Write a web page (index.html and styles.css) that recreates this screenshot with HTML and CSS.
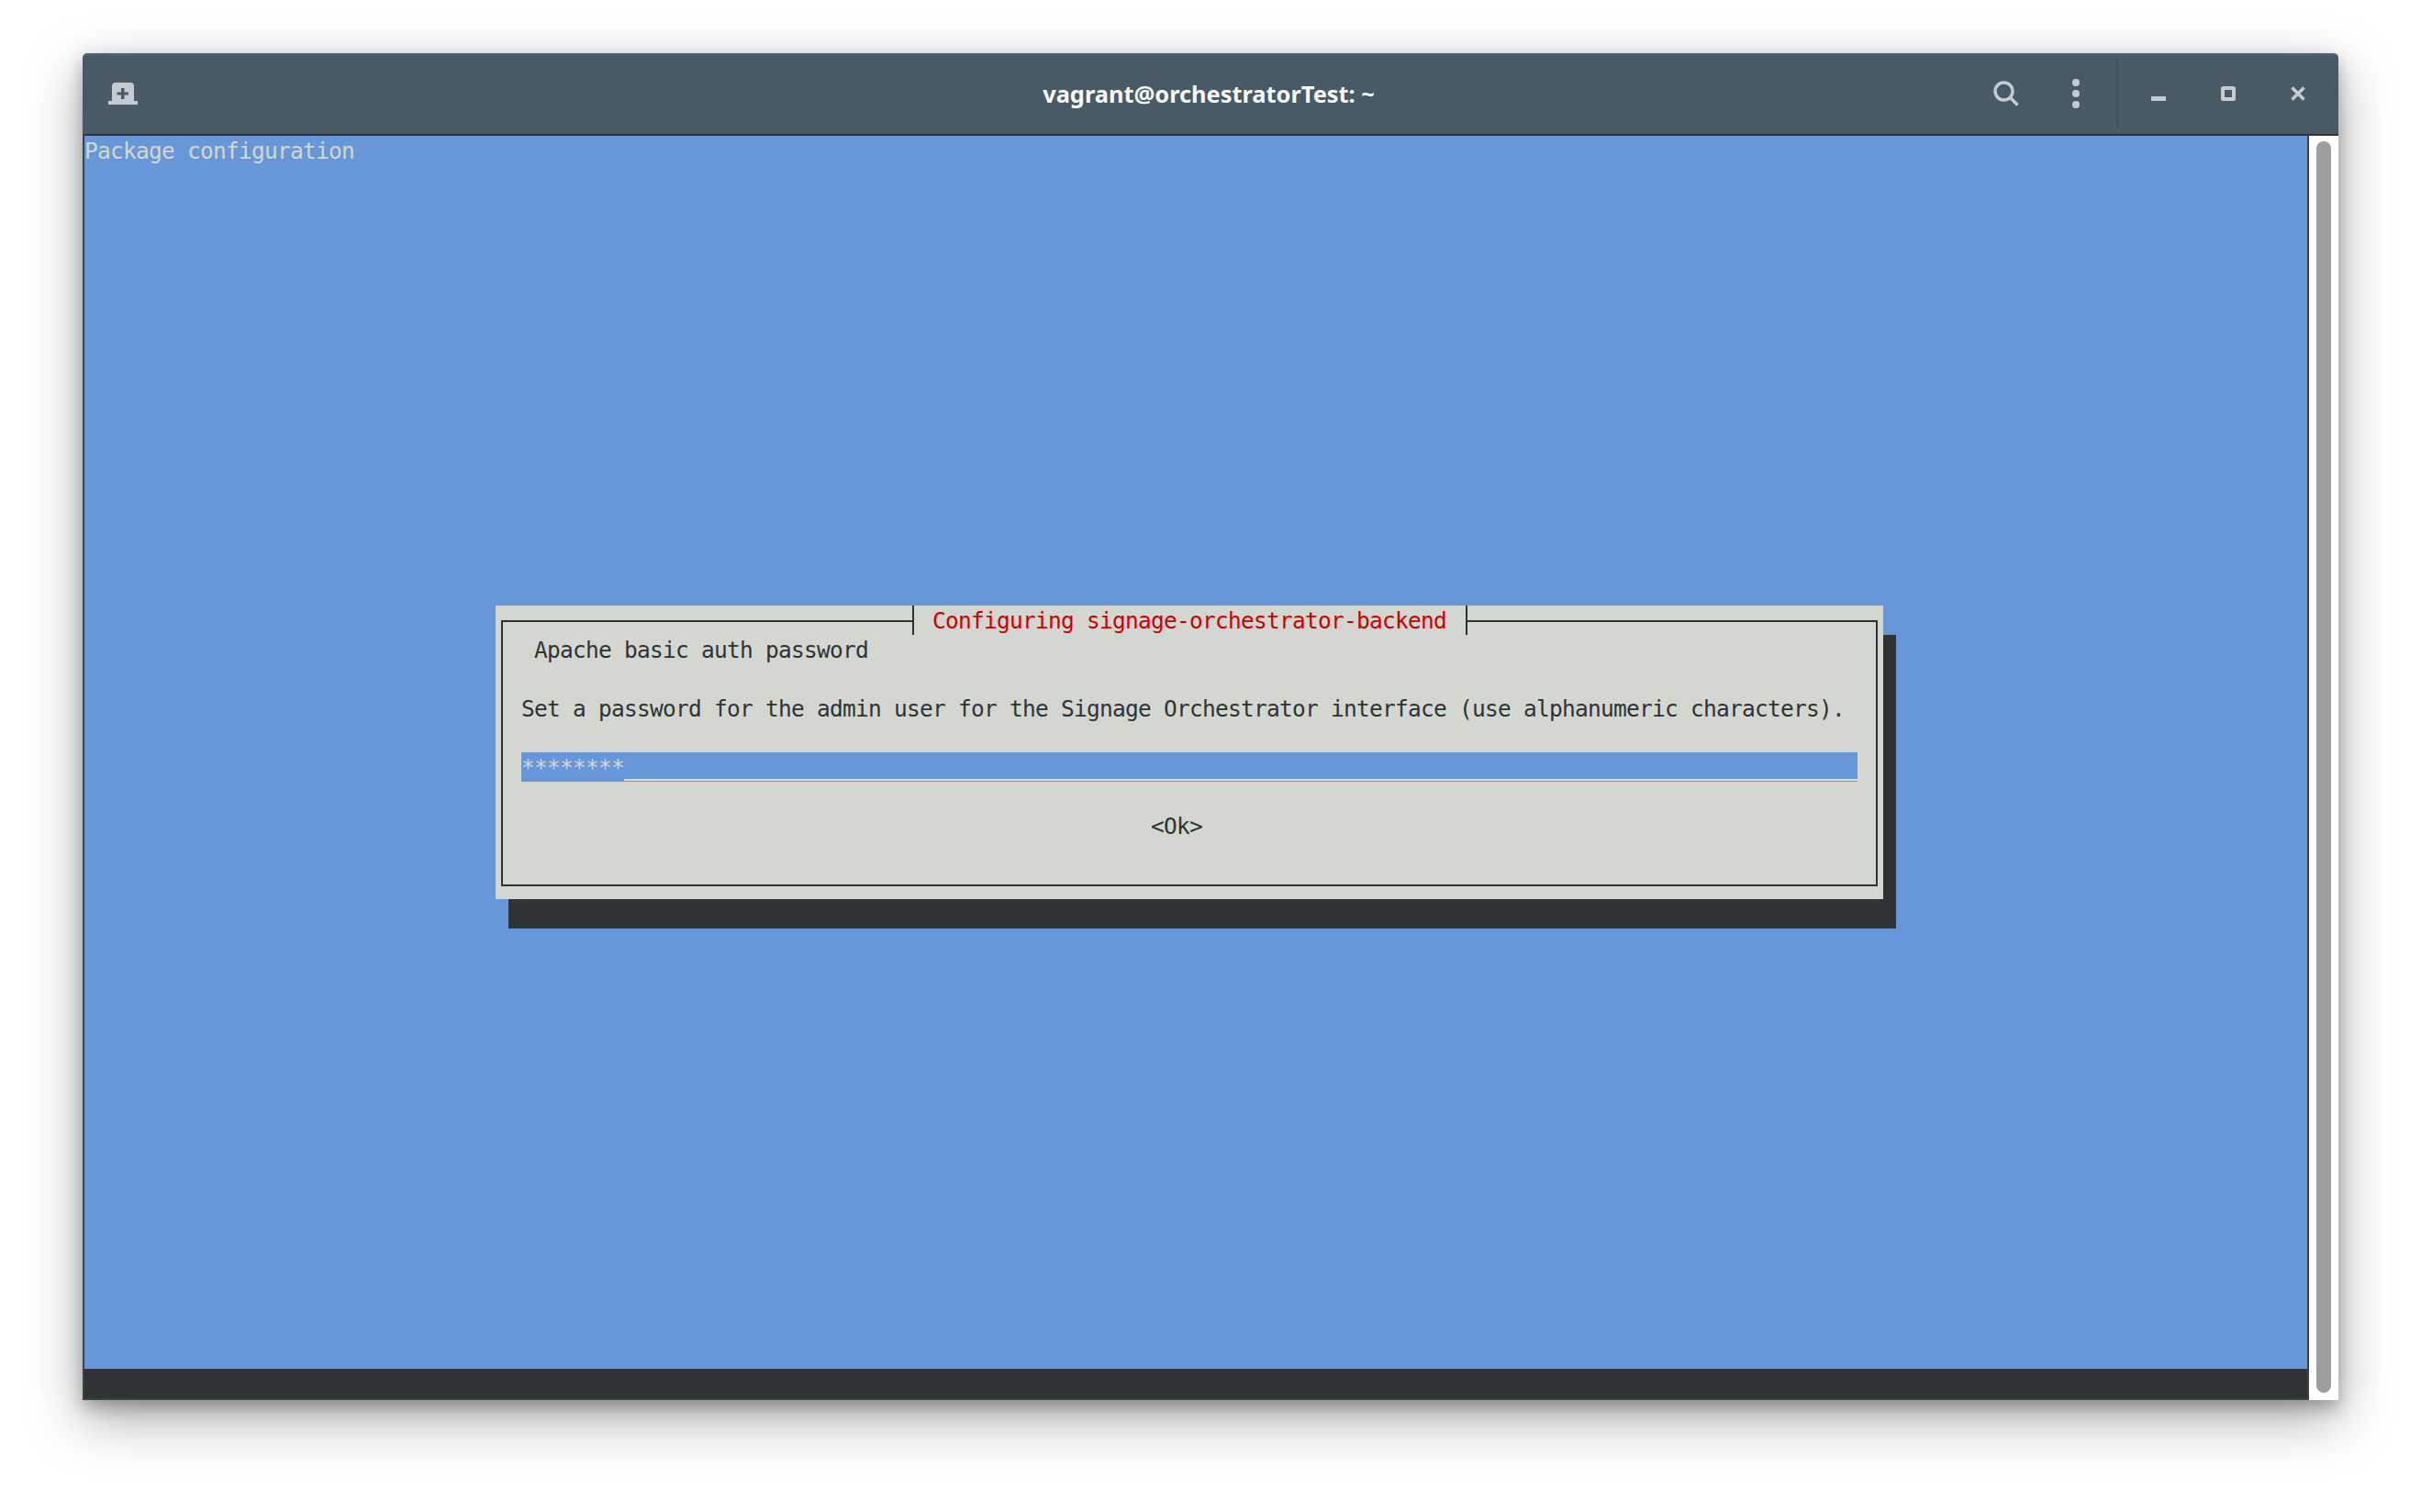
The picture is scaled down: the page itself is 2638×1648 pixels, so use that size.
FILE: index.html
```html
<!DOCTYPE html>
<html lang="en">
<head>
<meta charset="utf-8">
<title>vagrant@orchestratorTest: ~</title>
<link rel="stylesheet" href="styles.css">
</head>
<body>
<main class="window">
  <header class="titlebar">
    <div class="tb-left">
      <svg class="icon-newtab" width="32" height="24" viewBox="0 0 32 24">
        <path fill="#c5cbd0" fill-rule="evenodd" d="M8 0h16a4 4 0 0 1 4 4v16h4v4H0v-4h4V4a4 4 0 0 1 4-4zM14 6v4.500h-4.500v3H14V18h3.500v-4.500H22v-3h-4.500V6z"/>
      </svg>
    </div>
    <h1 class="title">vagrant@orchestratorTest: ~</h1>
    <div class="tb-right">
      <div class="tb-tools">
        <svg class="icon-search" width="28" height="28" viewBox="0 0 28 28">
          <circle cx="11.500" cy="11.500" r="9.500" fill="none" stroke="#c5cbd0" stroke-width="3.400"/>
          <path d="M18.500 18.500L26.500 26.500" fill="none" stroke="#c5cbd0" stroke-width="3.400"/>
        </svg>
        <svg class="icon-menu" width="8" height="32" viewBox="0 0 8 32">
          <circle cx="4" cy="4" r="4" fill="#c5cbd0"/>
          <circle cx="4" cy="16" r="4" fill="#c5cbd0"/>
          <circle cx="4" cy="28" r="4" fill="#c5cbd0"/>
        </svg>
      </div>
      <div class="tb-controls">
        <svg width="16" height="16" viewBox="0 0 16 16"><rect x="0" y="11" width="16" height="5" fill="#c5cbd0"/></svg>
        <svg width="16" height="16" viewBox="0 0 16 16"><rect x="2" y="2" width="12" height="12" rx="0.500" fill="none" stroke="#c5cbd0" stroke-width="4"/></svg>
        <svg width="16" height="16" viewBox="0 0 16 16"><path d="M1.500 1.500L14.500 14.500M14.500 1.500L1.500 14.500" fill="none" stroke="#c5cbd0" stroke-width="3.600"/></svg>
      </div>
    </div>
  </header>
  <div class="body">
    <section class="terminal">
      <div class="screen">
        <div class="backtitle"><span class="glyphs">Package configuration</span></div>
        <div class="dialog-shadow"></div>
        <div class="dialog">
          <div class="box">
            <div class="dialog-title"><span class="glyphs">Configuring signage-orchestrator-backend</span></div>
            <div class="subject"><span class="glyphs">Apache basic auth password</span></div>
            <div class="prompt"><span class="glyphs">Set a password for the admin user for the Signage Orchestrator interface (use alphanumeric characters).</span></div>
            <div class="input">
              <span class="stars"><span class="glyphs">********</span></span>
              <span class="input-rest"></span>
            </div>
            <div class="ok"><span class="glyphs">&lt;Ok&gt;</span></div>
          </div>
        </div>
      </div>
      <div class="statusbar"></div>
    </section>
    <aside class="scrollbar"><div class="thumb"></div></aside>
  </div>
</main>
</body>
</html>
```
FILE: styles.css
```css
html, body {
  margin: 0;
  padding: 0;
  background: #ffffff;
}
body {
  width: 2638px;
  height: 1648px;
  padding: 58px 90px 0;
  box-sizing: border-box;
  overflow: hidden;
}
.window {
  width: 2458px;
  height: 1468px;
  display: flex;
  flex-direction: column;
  border-radius: 5px 5px 0 0;
  box-shadow: 0 20px 60px rgba(0, 0, 0, 0.34), 0 8px 18px rgba(0, 0, 0, 0.26);
}
.titlebar {
  height: 90px;
  flex: none;
  box-sizing: border-box;
  display: grid;
  grid-template-columns: 1fr auto 1fr;
  align-items: center;
  padding-bottom: 2px;
  background: #485a65;
  border-top: 2px solid #53646f;
  border-bottom: 2px solid #2f3538;
  border-radius: 5px 5px 0 0;
}
.tb-left {
  padding-left: 28px;
  display: flex;
  align-items: center;
}
.title {
  margin: 0;
  text-align: center;
  font-family: "Noto Sans", sans-serif;
  font-weight: 700;
  font-size: 25.400px;
  line-height: 30px;
  color: #f7f8f8;
  padding-right: 4px;
}
.tb-right {
  display: flex;
  justify-content: flex-end;
  align-items: center;
}
.tb-tools {
  display: flex;
  align-items: center;
  gap: 58px;
  padding-right: 42px;
}
.tb-controls {
  display: flex;
  align-items: center;
  gap: 60px;
  padding: 29px 36px;
  box-shadow: -2px 0 0 #3f505b;
}
.body {
  flex: 1;
  display: flex;
  min-height: 0;
}
.terminal {
  flex: 1;
  display: flex;
  flex-direction: column;
  box-sizing: border-box;
  border-left: 2px solid #3c4245;
  border-right: 2px solid #3c4245;
  border-bottom: 2px solid #3c4245;
  font-family: "DejaVu Sans Mono", monospace;
  font-size: 24.500px;
  letter-spacing: -0.750px;
  line-height: 34px;
}
.screen {
  flex: 1;
  position: relative;
  background: #6797d9;
}
.glyphs {
  display: inline-block;
  white-space: pre;
}
.backtitle {
  height: 32px;
  color: #d3d7cf;
}
.statusbar {
  height: 32px;
  flex: none;
  background: #2e3436;
}
.dialog-shadow {
  position: absolute;
  left: 462px;
  top: 544px;
  width: 1512px;
  height: 320px;
  background: #2e3436;
}
.dialog {
  position: absolute;
  left: 448px;
  top: 512px;
  width: 1512px;
  height: 320px;
  box-sizing: border-box;
  padding: 16px 6px 14px;
  background: #d3d7cf;
  color: #2e3436;
}
.box {
  height: 100%;
  box-sizing: border-box;
  border: 2px solid #2e3436;
  position: relative;
  padding-left: 20px;
}
.dialog-title {
  position: absolute;
  left: 446px;
  top: -18px;
  width: 605px;
  height: 32px;
  box-sizing: border-box;
  padding-left: 20px;
  background: #d3d7cf;
  border-left: 2px solid #2e3436;
  border-right: 2px solid #2e3436;
  color: #cc0000;
}
.subject {
  height: 32px;
  margin-top: 14px;
  padding-left: 14px;
}
.prompt {
  height: 32px;
  margin-top: 32px;
}
.input {
  margin-top: 32px;
  width: 1456px;
  height: 32px;
  display: flex;
  align-items: flex-start;
  color: #d3d7cf;
}
.stars {
  width: 112px;
  height: 32px;
  background: #6797d9;
  line-height: 33px;
}
.input-rest {
  flex: 1;
  height: 29px;
  background: #6797d9;
  border-bottom: 2px solid #dde0da;
  box-shadow: 0 1px 0 #6797d9;
}
.ok {
  height: 32px;
  margin-top: 32px;
  padding-left: 686px;
}
.scrollbar {
  width: 32px;
  flex: none;
  box-sizing: border-box;
  padding: 6px 8px 8px;
  background: #ffffff;
}
.thumb {
  height: 100%;
  background: #9e9e9e;
  border-radius: 8px;
}
```
